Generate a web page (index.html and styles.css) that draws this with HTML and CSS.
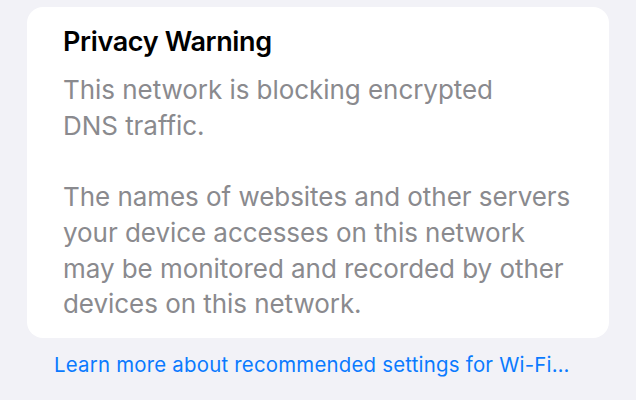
FILE: index.html
```html
<!DOCTYPE html>
<html>
<head>
<meta charset="utf-8">
<link rel="stylesheet" href="styles.css">
</head>
<body>
<div class="page">
  <div class="card">
    <div class="title">Privacy Warning</div>
    <p class="body">This network is blocking encrypted<br>DNS traffic.</p>
    <p class="body">The names of websites and other servers<br>your device accesses on this network<br>may be monitored and recorded by other<br>devices on this network.</p>
  </div>
  <div class="link">Learn more about recommended settings for Wi-Fi…</div>
</div>
</body>
</html>
```
FILE: styles.css
```css
html, body {
  margin: 0;
  padding: 0;
  background: #f2f2f7;
  width: 636px;
  height: 400px;
  overflow: hidden;
}
.page {
  padding: 7px 27px 0 27px;
  font-family: Inter, "Noto Sans", sans-serif;
}
.card {
  background: #ffffff;
  border-radius: 16px;
  padding: 19px 36px 16px 36px;
  height: 331px;
  box-sizing: border-box;
}
.title {
  font-size: 27px;
  font-weight: 600;
  color: #000;
  line-height: 32px;
  letter-spacing: -0.35px;
}
.body {
  margin: 14px 0 0 0;
  font-size: 26px;
  line-height: 35.7px;
  color: #8a8a8e;
  letter-spacing: -0.05px;
}
.body + .body {
  margin-top: 35.7px;
}
.link {
  margin: 13px 0 0 27px;
  font-size: 20.4px;
  line-height: 28px;
  color: #0a7aff;
  letter-spacing: 0.22px;
}
```
